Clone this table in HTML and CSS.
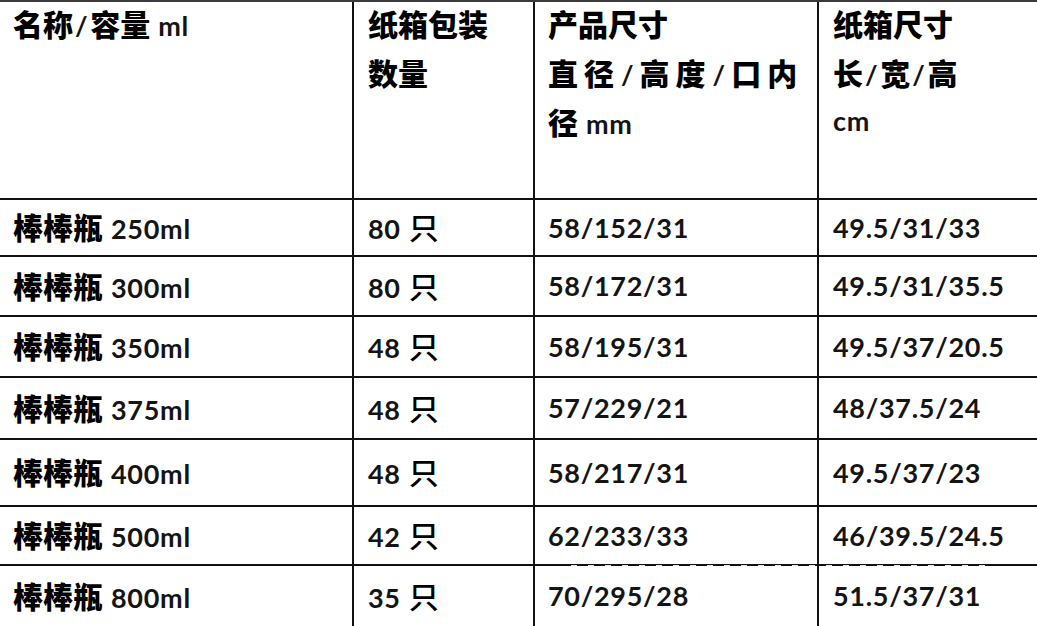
FILE: index.html
```html
<!DOCTYPE html>
<html lang="zh-CN">
<head>
<meta charset="utf-8">
<title>棒棒瓶规格</title>
<link rel="stylesheet" href="styles.css">
</head>
<body>
<div class="sheet">
  <div class="cell head c1">
    <div class="ln"><span class="zh">名称</span><span class="n sl">/</span><span class="zh">容量</span> <span class="n gap">ml</span></div>
  </div>
  <div class="cell head c2">
    <div class="ln"><span class="zh">纸箱包装</span></div>
    <div class="ln"><span class="zh">数量</span></div>
  </div>
  <div class="cell head c3">
    <div class="ln"><span class="zh">产品尺寸</span></div>
    <div class="ln spread"><span class="zh">直径</span><span class="n">/</span><span class="zh">高度</span><span class="n">/</span><span class="zh">口内</span></div>
    <div class="ln"><span class="zh">径</span> <span class="n gap">mm</span></div>
  </div>
  <div class="cell head c4">
    <div class="ln"><span class="zh">纸箱尺寸</span></div>
    <div class="ln"><span class="zh">长</span><span class="n sl">/</span><span class="zh">宽</span><span class="n sl">/</span><span class="zh">高</span></div>
    <div class="ln"><span class="n">cm</span></div>
  </div>

  <div class="cell c1"><div class="txt"><span class="zh">棒棒瓶</span> <span class="n gap">250ml</span></div></div>
  <div class="cell c2"><div class="txt"><span class="n">80</span> <span class="unit">只</span></div></div>
  <div class="cell c3"><div class="txt"><span class="n">58/152/31</span></div></div>
  <div class="cell c4"><div class="txt"><span class="n">49.5/31/33</span></div></div>

  <div class="cell c1"><div class="txt"><span class="zh">棒棒瓶</span> <span class="n gap">300ml</span></div></div>
  <div class="cell c2"><div class="txt"><span class="n">80</span> <span class="unit">只</span></div></div>
  <div class="cell c3"><div class="txt"><span class="n">58/172/31</span></div></div>
  <div class="cell c4"><div class="txt"><span class="n">49.5/31/35.5</span></div></div>

  <div class="cell c1"><div class="txt"><span class="zh">棒棒瓶</span> <span class="n gap">350ml</span></div></div>
  <div class="cell c2"><div class="txt"><span class="n">48</span> <span class="unit">只</span></div></div>
  <div class="cell c3"><div class="txt"><span class="n">58/195/31</span></div></div>
  <div class="cell c4"><div class="txt"><span class="n">49.5/37/20.5</span></div></div>

  <div class="cell c1"><div class="txt"><span class="zh">棒棒瓶</span> <span class="n gap">375ml</span></div></div>
  <div class="cell c2"><div class="txt"><span class="n">48</span> <span class="unit">只</span></div></div>
  <div class="cell c3"><div class="txt"><span class="n">57/229/21</span></div></div>
  <div class="cell c4"><div class="txt"><span class="n">48/37.5/24</span></div></div>

  <div class="cell c1"><div class="txt"><span class="zh">棒棒瓶</span> <span class="n gap">400ml</span></div></div>
  <div class="cell c2"><div class="txt"><span class="n">48</span> <span class="unit">只</span></div></div>
  <div class="cell c3"><div class="txt"><span class="n">58/217/31</span></div></div>
  <div class="cell c4"><div class="txt"><span class="n">49.5/37/23</span></div></div>

  <div class="cell c1"><div class="txt"><span class="zh">棒棒瓶</span> <span class="n gap">500ml</span></div></div>
  <div class="cell c2"><div class="txt"><span class="n">42</span> <span class="unit">只</span></div></div>
  <div class="cell c3"><div class="txt"><span class="n">62/233/33</span></div></div>
  <div class="cell c4"><div class="txt"><span class="n">46/39.5/24.5</span></div></div>

  <div class="cell c1"><div class="txt"><span class="zh">棒棒瓶</span> <span class="n gap">800ml</span></div></div>
  <div class="cell c2"><div class="txt"><span class="n">35</span> <span class="unit">只</span></div></div>
  <div class="cell c3"><div class="txt"><span class="n">70/295/28</span></div></div>
  <div class="cell c4"><div class="txt"><span class="n">51.5/37/31</span></div></div>

  <div class="watermark"></div>
</div>
</body>
</html>
```

FILE: styles.css
```css
html, body {
  margin: 0;
  padding: 0;
  background: #ffffff;
  overflow: hidden;
}

.sheet {
  position: relative;
  display: grid;
  grid-template-columns: 354px 181px 284px 240px;
  grid-template-rows: 198px 57px 60px 61px 62px 67px 59px 62px;
  border-top: 2px solid #3a3a3a;
  width: 1059px;
  color: #000;
}

.cell {
  border-right: 2px solid #111;
  border-bottom: 2px solid #111;
  display: flex;
  align-items: center;
  white-space: nowrap;
}

.txt {
  line-height: 36px;
  padding-top: 5px;
}

.cell.head {
  display: block;
}

.ln {
  height: 49px;
  line-height: 42px;
}

.c1 { padding-left: 13px; }
.c2 { padding-left: 14px; }
.c3 { padding-left: 13px; }
.c4 { padding-left: 14px; }

.zh {
  font-family: "Noto Sans CJK SC", sans-serif;
  font-weight: 900;
  font-size: 30px;
  color: #000;
}

.n {
  font-family: Lato, "Liberation Sans", sans-serif;
  font-weight: 700;
  font-size: 27px;
  letter-spacing: 0.7px;
  color: #141414;
}

.gap { margin-left: 4px; }
.sl { margin: 0 2px; }

.unit {
  font-family: "Noto Sans CJK SC", sans-serif;
  font-weight: 500;
  font-size: 30px;
  margin-left: 4px;
  color: #000;
}

.spread {
  letter-spacing: 6px;
}

.spread .n {
  letter-spacing: 6px;
  margin-left: 1px;
}

.watermark {
  position: absolute;
  left: 560px;
  top: 563px;
  width: 430px;
  height: 4px;
  background: repeating-linear-gradient(90deg, rgba(255,255,255,0) 0 11px, rgba(255,255,255,0.9) 11px 17px);
}
```
